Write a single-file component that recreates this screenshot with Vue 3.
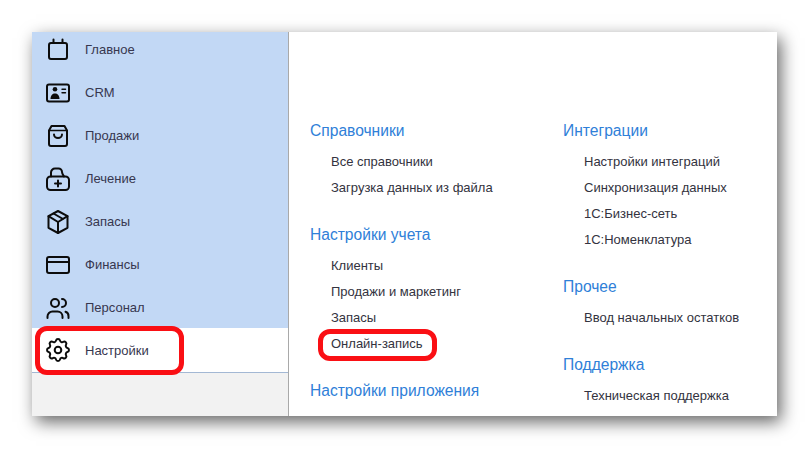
<script setup>
const navItems = [
  { key: 'home', label: 'Главное' },
  { key: 'crm', label: 'CRM' },
  { key: 'sales', label: 'Продажи' },
  { key: 'care', label: 'Лечение' },
  { key: 'stock', label: 'Запасы' },
  { key: 'money', label: 'Финансы' },
  { key: 'staff', label: 'Персонал' },
  { key: 'settings', label: 'Настройки', active: true },
]
const columns = [
  [
    { title: 'Справочники', links: ['Все справочники', 'Загрузка данных из файла'] },
    { title: 'Настройки учета', links: ['Клиенты', 'Продажи и маркетинг', 'Запасы', 'Онлайн-запись'] },
    { title: 'Настройки приложения', links: [] },
  ],
  [
    { title: 'Интеграции', links: ['Настройки интеграций', 'Синхронизация данных', '1С:Бизнес-сеть', '1С:Номенклатура'] },
    { title: 'Прочее', links: ['Ввод начальных остатков'] },
    { title: 'Поддержка', links: ['Техническая поддержка'] },
  ],
]
</script>

<template>
  <div class="page">
    <div class="panel">
      <aside class="sidebar">
        <nav class="nav">
          <a v-for="item in navItems" :key="item.key" class="nav-item" :class="{ active: item.active }">
            <svg class="icon" viewBox="0 0 24 24" fill="none" stroke="#0c0c0c" stroke-width="2" stroke-linecap="round" stroke-linejoin="round">
              <template v-if="item.key === 'home'">
                <rect x="3" y="5" width="18" height="16" rx="2" />
                <path d="M7.500 1.500V5M16.500 1.500V5" />
              </template>
              <template v-else-if="item.key === 'crm'">
                <rect x="1" y="3.500" width="22" height="17" rx="2" />
                <circle cx="9" cy="8.300" r="2.300" fill="#0c0c0c" stroke="none" />
                <path d="M4.500 18c0-3.600 2-5.600 4.500-5.600s4.500 2 4.500 5.600z" fill="#0c0c0c" stroke="none" />
                <path d="M16 8.300h3.500M16 11.700h3.500" stroke-width="1.400" />
              </template>
              <template v-else-if="item.key === 'sales'">
                <path d="M5.500 2h13L21 6.500V20a2 2 0 0 1-2 2H5a2 2 0 0 1-2-2V6.500z" />
                <path d="M3 6.500h18" stroke-width="1.600" />
                <path d="M8 10.500a4 3.500 0 0 0 8 0" />
              </template>
              <template v-else-if="item.key === 'care'">
                <rect x="1" y="9.500" width="22" height="13.500" rx="3.500" />
                <path d="M5 9.500V5.500a4 4 0 0 1 4-4h3.500a3.500 3.500 0 0 1 3.500 3.500c0 1.500 1 2.800 2 4.500" />
                <path d="M12 13.500v6M9 16.500h6" />
              </template>
              <template v-else-if="item.key === 'stock'">
                <path d="M12 1l9.500 5.200v11.600L12 23l-9.500-5.200V6.200z" />
                <path d="M2.500 6.200l9.500 5.800 9.500-5.800M12 12v11M7.500 3.500l9.500 5.500" />
              </template>
              <template v-else-if="item.key === 'money'">
                <rect x="1" y="4" width="22" height="16" rx="2" />
                <path d="M1 9h22" />
              </template>
              <template v-else-if="item.key === 'staff'">
                <circle cx="9" cy="7" r="4" />
                <path d="M1.500 22v-1.500a5 5 0 0 1 5-5h5a5 5 0 0 1 5 5V22" />
                <path d="M16 3a4 4 0 0 1 0 8M19.500 15.800a4.500 4.500 0 0 1 3 4.500V22" />
              </template>
              <template v-else>
                <g transform="translate(-2.640 -2.640) scale(1.220)" stroke-width="1.640">
                  <path d="M10.325 4.317c.426 -1.756 2.924 -1.756 3.350 0a1.724 1.724 0 0 0 2.573 1.066c1.543 -.94 3.310 .826 2.370 2.370a1.724 1.724 0 0 0 1.065 2.572c1.756 .426 1.756 2.924 0 3.350a1.724 1.724 0 0 0 -1.066 2.573c.94 1.543 -.826 3.310 -2.370 2.370a1.724 1.724 0 0 0 -2.572 1.065c-.426 1.756 -2.924 1.756 -3.350 0a1.724 1.724 0 0 0 -2.573 -1.066c-1.543 .94 -3.310 -.826 -2.370 -2.370a1.724 1.724 0 0 0 -1.065 -2.572c-1.756 -.426 -1.756 -2.924 0 -3.350a1.724 1.724 0 0 0 1.066 -2.573c-.94 -1.543 .826 -3.310 2.370 -2.370c1 .608 2.296 .07 2.572 -1.065z" />
                  <circle cx="12" cy="12" r="2.700" />
                </g>
              </template>
            </svg>
            <span class="nav-label">{{ item.label }}</span>
          </a>
        </nav>
      </aside>
      <main class="content">
        <div v-for="(col, i) in columns" :key="i" class="column">
          <section v-for="group in col" :key="group.title" class="group">
            <h3 class="group-title">{{ group.title }}</h3>
            <a v-for="link in group.links" :key="link" class="link">{{ link }}</a>
          </section>
        </div>
      </main>
      <div class="mark mark-nav"></div>
      <div class="mark mark-link"></div>
    </div>
  </div>
</template>

<style scoped>
.page {
  width: 809px;
  height: 463px;
  box-sizing: border-box;
  padding: 32px;
  font-family: "Liberation Sans", Arial, sans-serif;
  background: #fff;
}
.panel {
  position: relative;
  display: flex;
  width: 745px;
  height: 384px;
  background: #fff;
  box-shadow: 4px 6px 16px rgba(0, 0, 0, 0.6);
}
.sidebar {
  width: 257px;
  flex: none;
  box-sizing: border-box;
  background: #f2f2f2;
  border-right: 1px solid #a9a9a9;
  overflow: hidden;
}
.nav {
  display: flex;
  flex-direction: column;
  margin-top: -4px;
  background: #c2d8f5;
  border-bottom: 1px solid #a3b8d4;
}
.nav-item {
  display: flex;
  align-items: center;
  gap: 15px;
  height: 43px;
  padding-left: 14px;
  color: #37374f;
  font-size: 13px;
}
.nav-item.active {
  background: #fff;
  margin-top: -1px;
  height: 44px;
}
.icon {
  width: 24px;
  height: 24px;
  flex: none;
}
.content {
  flex: 1;
  display: flex;
  padding: 87px 0 0 21px;
  overflow: hidden;
}
.column {
  width: 253px;
  flex: none;
}
.group {
  display: flex;
  flex-direction: column;
  margin-bottom: 22px;
}
.group-title {
  margin: 0 0 4px;
  height: 26px;
  line-height: 24px;
  font-size: 15.6px;
  font-weight: 400;
  color: #2f80d8;
}
.link {
  height: 26px;
  line-height: 26px;
  padding-left: 21px;
  font-size: 13px;
  color: #333340;
}
.mark {
  position: absolute;
  box-sizing: border-box;
  border: 5px solid #fa0f14;
  pointer-events: none;
}
.mark-nav {
  left: 3px;
  top: 294px;
  width: 149px;
  height: 49px;
  border-radius: 12px;
}
.mark-link {
  left: 286px;
  top: 297px;
  width: 119px;
  height: 32px;
  border-radius: 12px;
}
</style>
